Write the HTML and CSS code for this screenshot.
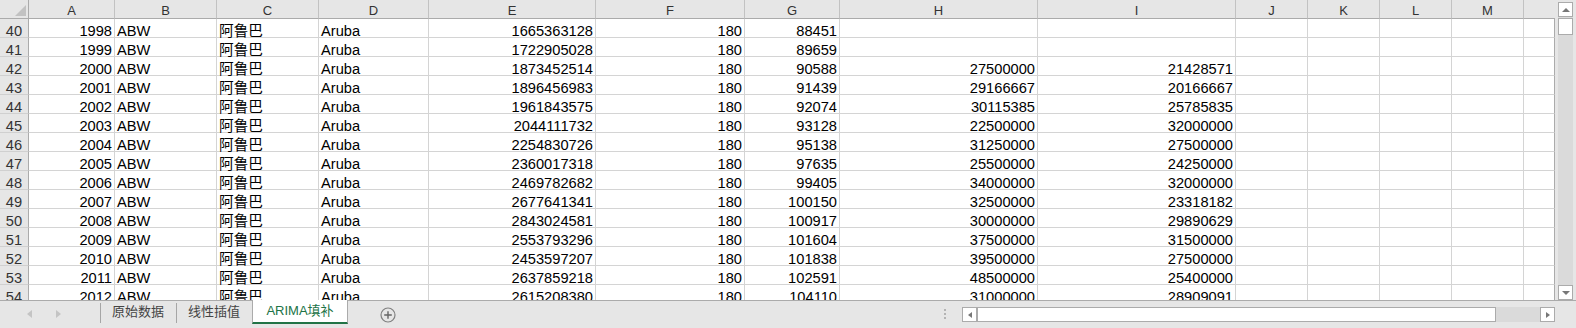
FILE: index.html
```html
<!DOCTYPE html>
<html lang="zh">
<head>
<meta charset="utf-8">
<title>ARIMA填补</title>
<link rel="stylesheet" href="styles.css">
</head>
<body>
<div class="app">
  <div class="main">
    <div class="sheet">
      <div class="corner"></div><div class="h">A</div><div class="h">B</div><div class="h">C</div><div class="h">D</div><div class="h">E</div><div class="h">F</div><div class="h">G</div><div class="h">H</div><div class="h">I</div><div class="h">J</div><div class="h">K</div><div class="h">L</div><div class="h">M</div><div class="h hn"></div>

      <div class="r">40</div><div class="c n">1998</div><div class="c">ABW</div><div class="c">阿鲁巴</div><div class="c">Aruba</div><div class="c n">1665363128</div><div class="c n">180</div><div class="c n">88451</div><div class="c n"></div><div class="c n"></div><div class="c"></div><div class="c"></div><div class="c"></div><div class="c"></div><div class="c last"></div>
      <div class="r">41</div><div class="c n">1999</div><div class="c">ABW</div><div class="c">阿鲁巴</div><div class="c">Aruba</div><div class="c n">1722905028</div><div class="c n">180</div><div class="c n">89659</div><div class="c n"></div><div class="c n"></div><div class="c"></div><div class="c"></div><div class="c"></div><div class="c"></div><div class="c last"></div>
      <div class="r">42</div><div class="c n">2000</div><div class="c">ABW</div><div class="c">阿鲁巴</div><div class="c">Aruba</div><div class="c n">1873452514</div><div class="c n">180</div><div class="c n">90588</div><div class="c n">27500000</div><div class="c n">21428571</div><div class="c"></div><div class="c"></div><div class="c"></div><div class="c"></div><div class="c last"></div>
      <div class="r">43</div><div class="c n">2001</div><div class="c">ABW</div><div class="c">阿鲁巴</div><div class="c">Aruba</div><div class="c n">1896456983</div><div class="c n">180</div><div class="c n">91439</div><div class="c n">29166667</div><div class="c n">20166667</div><div class="c"></div><div class="c"></div><div class="c"></div><div class="c"></div><div class="c last"></div>
      <div class="r">44</div><div class="c n">2002</div><div class="c">ABW</div><div class="c">阿鲁巴</div><div class="c">Aruba</div><div class="c n">1961843575</div><div class="c n">180</div><div class="c n">92074</div><div class="c n">30115385</div><div class="c n">25785835</div><div class="c"></div><div class="c"></div><div class="c"></div><div class="c"></div><div class="c last"></div>
      <div class="r">45</div><div class="c n">2003</div><div class="c">ABW</div><div class="c">阿鲁巴</div><div class="c">Aruba</div><div class="c n">2044111732</div><div class="c n">180</div><div class="c n">93128</div><div class="c n">22500000</div><div class="c n">32000000</div><div class="c"></div><div class="c"></div><div class="c"></div><div class="c"></div><div class="c last"></div>
      <div class="r">46</div><div class="c n">2004</div><div class="c">ABW</div><div class="c">阿鲁巴</div><div class="c">Aruba</div><div class="c n">2254830726</div><div class="c n">180</div><div class="c n">95138</div><div class="c n">31250000</div><div class="c n">27500000</div><div class="c"></div><div class="c"></div><div class="c"></div><div class="c"></div><div class="c last"></div>
      <div class="r">47</div><div class="c n">2005</div><div class="c">ABW</div><div class="c">阿鲁巴</div><div class="c">Aruba</div><div class="c n">2360017318</div><div class="c n">180</div><div class="c n">97635</div><div class="c n">25500000</div><div class="c n">24250000</div><div class="c"></div><div class="c"></div><div class="c"></div><div class="c"></div><div class="c last"></div>
      <div class="r">48</div><div class="c n">2006</div><div class="c">ABW</div><div class="c">阿鲁巴</div><div class="c">Aruba</div><div class="c n">2469782682</div><div class="c n">180</div><div class="c n">99405</div><div class="c n">34000000</div><div class="c n">32000000</div><div class="c"></div><div class="c"></div><div class="c"></div><div class="c"></div><div class="c last"></div>
      <div class="r">49</div><div class="c n">2007</div><div class="c">ABW</div><div class="c">阿鲁巴</div><div class="c">Aruba</div><div class="c n">2677641341</div><div class="c n">180</div><div class="c n">100150</div><div class="c n">32500000</div><div class="c n">23318182</div><div class="c"></div><div class="c"></div><div class="c"></div><div class="c"></div><div class="c last"></div>
      <div class="r">50</div><div class="c n">2008</div><div class="c">ABW</div><div class="c">阿鲁巴</div><div class="c">Aruba</div><div class="c n">2843024581</div><div class="c n">180</div><div class="c n">100917</div><div class="c n">30000000</div><div class="c n">29890629</div><div class="c"></div><div class="c"></div><div class="c"></div><div class="c"></div><div class="c last"></div>
      <div class="r">51</div><div class="c n">2009</div><div class="c">ABW</div><div class="c">阿鲁巴</div><div class="c">Aruba</div><div class="c n">2553793296</div><div class="c n">180</div><div class="c n">101604</div><div class="c n">37500000</div><div class="c n">31500000</div><div class="c"></div><div class="c"></div><div class="c"></div><div class="c"></div><div class="c last"></div>
      <div class="r">52</div><div class="c n">2010</div><div class="c">ABW</div><div class="c">阿鲁巴</div><div class="c">Aruba</div><div class="c n">2453597207</div><div class="c n">180</div><div class="c n">101838</div><div class="c n">39500000</div><div class="c n">27500000</div><div class="c"></div><div class="c"></div><div class="c"></div><div class="c"></div><div class="c last"></div>
      <div class="r">53</div><div class="c n">2011</div><div class="c">ABW</div><div class="c">阿鲁巴</div><div class="c">Aruba</div><div class="c n">2637859218</div><div class="c n">180</div><div class="c n">102591</div><div class="c n">48500000</div><div class="c n">25400000</div><div class="c"></div><div class="c"></div><div class="c"></div><div class="c"></div><div class="c last"></div>
      <div class="r">54</div><div class="c n">2012</div><div class="c">ABW</div><div class="c">阿鲁巴</div><div class="c">Aruba</div><div class="c n">2615208380</div><div class="c n">180</div><div class="c n">104110</div><div class="c n">31000000</div><div class="c n">28909091</div><div class="c"></div><div class="c"></div><div class="c"></div><div class="c"></div><div class="c last"></div>
    </div>
    <div class="vscroll">
      <div class="vbtn"><span class="tri-up"></span></div>
      <div class="vtrack"><div class="vthumb"></div></div>
      <div class="vbtn"><span class="tri-down"></span></div>
    </div>
  </div>
  <div class="tabbar">
    <div class="nav"><span class="nav-left"></span><span class="nav-right"></span></div>
    <div class="tab">原始数据</div>
    <div class="tab">线性插值</div>
    <div class="tab active">ARIMA填补</div>
    <div class="add">
      <svg width="16" height="16" viewBox="0 0 16 16"><circle cx="8" cy="8" r="7" fill="none" stroke="#808080" stroke-width="1.2"/><path d="M8 4.2V11.8M4.2 8H11.8" stroke="#666" stroke-width="1.4"/></svg>
    </div>
    <div class="spacer"></div>
    <div class="dots"></div>
    <div class="hscroll">
      <div class="hbtn"><span class="tri-left"></span></div>
      <div class="hthumb"></div>
      <div class="htrack"></div>
      <div class="hbtn"><span class="tri-right"></span></div>
    </div>
  </div>
</div>
</body>
</html>
```
FILE: styles.css
```css
* { box-sizing: border-box; }
html, body { margin: 0; padding: 0; }
body {
  width: 1576px;
  height: 328px;
  overflow: hidden;
  background: #e6e6e6;
  font-family: "Liberation Sans", "Noto Sans CJK SC", sans-serif;
  color: #000;
}
.app { display: flex; flex-direction: column; height: 328px; }
.main { display: flex; height: 300px; }

.sheet {
  width: 1555px;
  height: 300px;
  overflow: hidden;
  display: grid;
  grid-template-columns: 29px 86px 102px 102px 110px 167px 149px 95px 198px 198px 72px 72px 72px 72px 31px;
  grid-auto-rows: 19px;
  background: #fff;
}
.corner {
  position: relative;
  background: #e6e6e6;
  border-right: 1px solid #ababab;
  border-bottom: 1px solid #ababab;
}
.corner::after {
  content: "";
  position: absolute;
  right: 2px;
  bottom: 2px;
  width: 0;
  height: 0;
  border-style: solid;
  border-width: 0 0 11px 11px;
  border-color: transparent transparent #c2c2c2 transparent;
}
.h {
  background: #e6e6e6;
  border-right: 1px solid #c2c2c2;
  border-bottom: 1px solid #ababab;
  text-align: center;
  font-size: 13px;
  line-height: 15px;
  padding-top: 3px;
  color: #333;
}
.h.hn { border-right: none; }
.r {
  background: #e6e6e6;
  border-right: 1px solid #ababab;
  border-bottom: 1px solid #d0d0d0;
  text-align: center;
  font-size: 14.67px;
  line-height: 18px;
  padding-top: 3px;
  color: #333;
}
.c {
  border-right: 1px solid #d4d4d4;
  border-bottom: 1px solid #d4d4d4;
  font-size: 14.67px;
  line-height: 18px;
  padding: 3px 2px 0;
  white-space: nowrap;
}
.n { text-align: right; }
.last { border-right-color: #ababab; }

.vscroll {
  width: 21px;
  height: 300px;
  padding: 2px 3px 0;
  display: flex;
  flex-direction: column;
}
.vbtn {
  width: 15px;
  height: 15px;
  flex: none;
  background: #fff;
  border: 1px solid #ababab;
  display: flex;
  align-items: center;
  justify-content: center;
}
.vtrack {
  flex: 1;
  background: #dadada;
  padding-top: 1px;
}
.vthumb {
  height: 17px;
  background: #fff;
  border: 1px solid #ababab;
}
.tri-up, .tri-down, .tri-left, .tri-right { width: 0; height: 0; border-style: solid; }
.tri-up { border-width: 0 4px 4px 4px; border-color: transparent transparent #777 transparent; }
.tri-down { border-width: 4px 4px 0 4px; border-color: #777 transparent transparent transparent; }
.tri-left { border-width: 3.5px 4px 3.5px 0; border-color: transparent #777 transparent transparent; }
.tri-right { border-width: 3.5px 0 3.5px 4px; border-color: transparent transparent transparent #777; }

.tabbar {
  height: 28px;
  display: flex;
  align-items: flex-start;
  box-shadow: inset 0 1px 0 #ababab;
  font-size: 13px;
}
.nav {
  width: 100px;
  height: 28px;
  display: flex;
  align-items: center;
  padding-left: 27px;
  padding-bottom: 1px;
  gap: 24px;
}
.nav-left, .nav-right { width: 0; height: 0; border-style: solid; }
.nav-left { border-width: 4px 5px 4px 0; border-color: transparent #c4c4c4 transparent transparent; }
.nav-right { border-width: 4px 0 4px 5px; border-color: transparent transparent transparent #c4c4c4; }
.tab {
  position: relative;
  width: 76px;
  height: 28px;
  line-height: 24px;
  text-align: center;
  color: #444;
}
.tab::before {
  content: "";
  position: absolute;
  left: 0;
  top: 3px;
  width: 1px;
  height: 20px;
  background: #a6a6a6;
}
.tab.active {
  width: 96px;
  height: 24px;
  line-height: 22px;
  background: #fff;
  border-left: 1px solid #ababab;
  border-right: 1px solid #ababab;
  border-bottom: 2px solid #217346;
  color: #217346;
}
.tab.active::before { display: none; }
.add {
  width: 16px;
  height: 16px;
  margin-left: 32px;
  margin-top: 7px;
}
.add svg { display: block; }
.spacer { flex: 1; }
.dots {
  width: 2px;
  height: 10px;
  margin-top: 9px;
  margin-right: 16px;
  background: repeating-linear-gradient(to bottom, #b3b3b3 0 2px, transparent 2px 4px);
}
.hscroll {
  width: 593px;
  height: 15px;
  margin-top: 7px;
  margin-right: 21px;
  display: flex;
  background: #dadada;
}
.hbtn {
  width: 15px;
  height: 15px;
  flex: none;
  background: #fff;
  border: 1px solid #ababab;
  display: flex;
  align-items: center;
  justify-content: center;
}
.hthumb {
  width: 519px;
  flex: none;
  background: #fff;
  border: 1px solid #ababab;
}
.htrack { flex: 1; }
```
